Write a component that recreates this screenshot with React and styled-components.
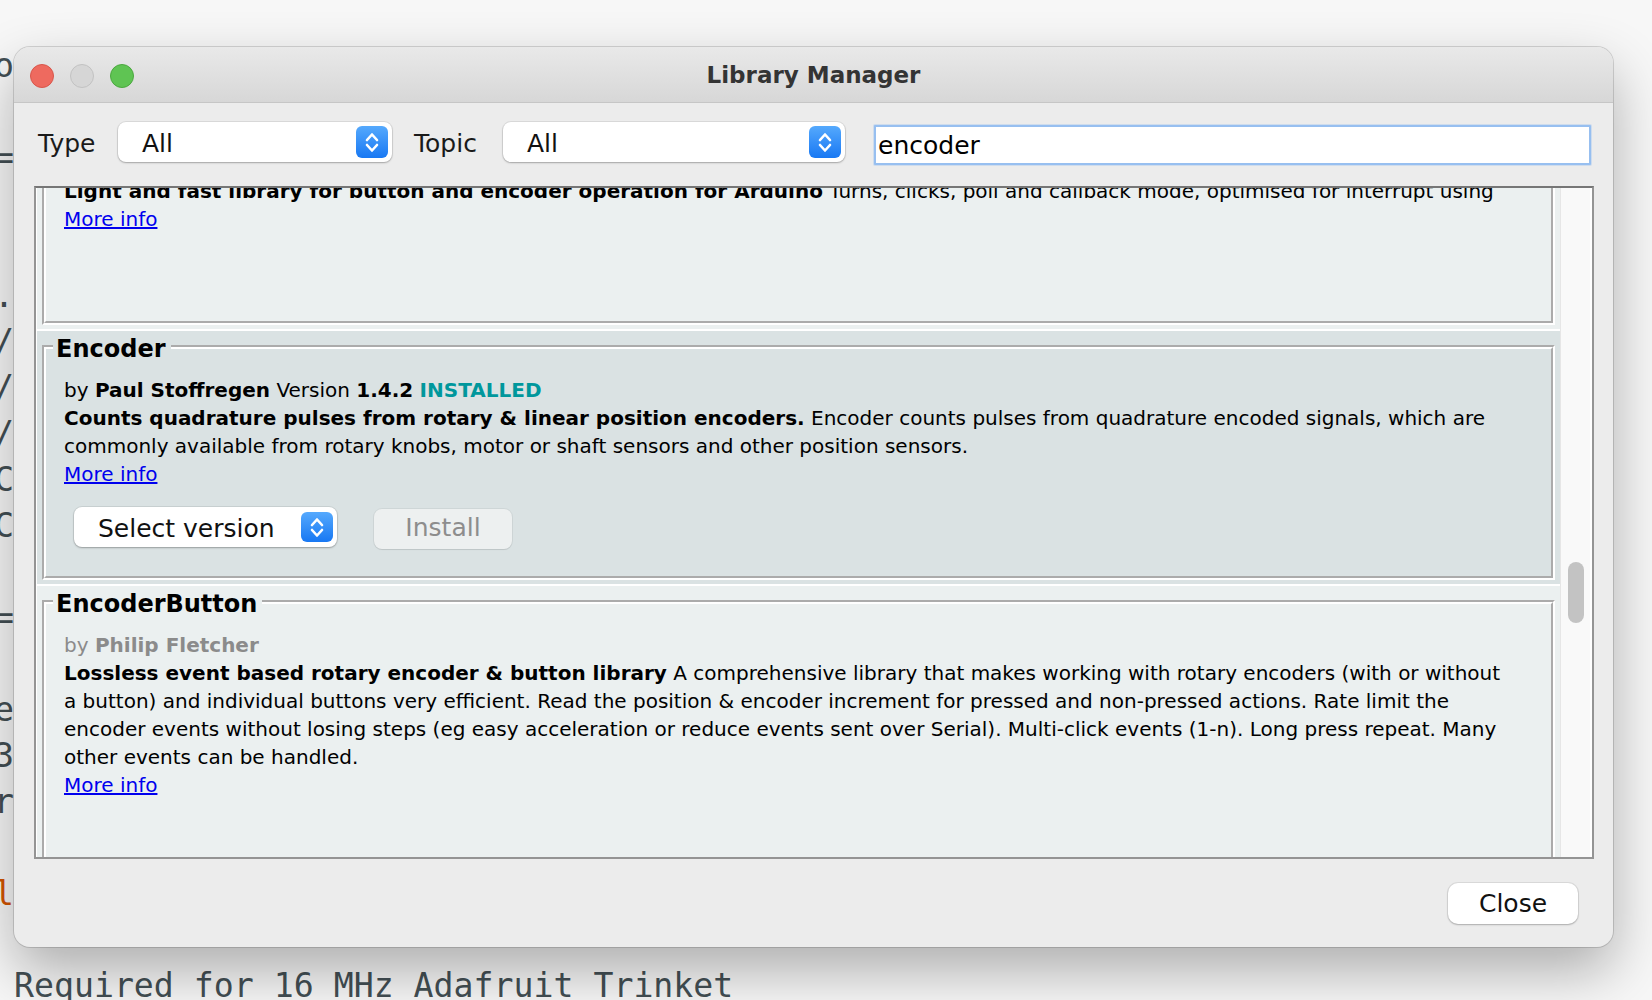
import React from 'react';
import styled, { createGlobalStyle } from 'styled-components';

const GlobalStyle = createGlobalStyle`
  html, body {
    margin: 0;
    padding: 0;
  }
  body {
    width: 1652px;
    height: 1000px;
    overflow: hidden;
    background: #f6f6f6;
    font-family: "DejaVu Sans", Verdana, sans-serif;
  }
`;

const Desktop = styled.div`
  position: relative;
  width: 1652px;
  height: 1000px;
  overflow: hidden;
  background: #f7f7f7;
`;

// the sketch editor peeking out from behind the dialog
const Editor = styled.div`
  margin-left: -6px;
  padding-top: 42.6px;
  font-family: "DejaVu Sans Mono", "Liberation Mono", monospace;
  font-size: 33.2px;
  color: #434f54;
`;

const EditorLine = styled.div`
  height: 46px;
  line-height: 46px;
  white-space: pre;
  color: ${props => (props.keyword ? '#d35400' : 'inherit')};
`;

const Window = styled.div`
  position: absolute;
  left: 14px;
  top: 47px;
  width: 1599px;
  height: 900px;
  display: flex;
  flex-direction: column;
  background: #ececec;
  border-radius: 16px;
  overflow: hidden;
  box-shadow: 0 0 0 1px rgba(0, 0, 0, 0.14), 0 24px 56px rgba(0, 0, 0, 0.3);
`;

const TitleBar = styled.div`
  flex: none;
  height: 55px;
  display: grid;
  grid-template-columns: 1fr auto 1fr;
  align-items: center;
  padding: 0 16px;
  background: linear-gradient(#e9e9e9, #d7d7d7);
  border-bottom: 1px solid #c6c6c6;
`;

const Lights = styled.div`
  display: flex;
  gap: 16px;
  padding-top: 2px;
`;

const Light = styled.span`
  width: 24px;
  height: 24px;
  border-radius: 50%;
  box-sizing: border-box;
  background: ${props => props.fill};
  border: 1px solid ${props => props.edge};
`;

const Title = styled.div`
  font-size: 23px;
  font-weight: bold;
  color: #343434;
`;

const Toolbar = styled.div`
  flex: none;
  display: flex;
  align-items: flex-start;
  padding: 19px 22px 21px 24px;
`;

const FieldLabel = styled.span`
  flex: none;
  width: ${props => props.width}px;
  font-size: 25px;
  line-height: 40px;
  padding-top: 2px;
  color: #1a1a1a;
`;

const SelectBox = styled.div`
  flex: none;
  width: ${props => props.width}px;
  height: 40px;
  box-sizing: border-box;
  display: flex;
  align-items: center;
  justify-content: space-between;
  padding: 0 4px 0 24px;
  margin-right: ${props => props.gap || 0}px;
  background: #fff;
  border-radius: 8px;
  box-shadow: 0 0 0 1px rgba(0, 0, 0, 0.07), 0 1px 2px rgba(0, 0, 0, 0.25);
  font-size: 25px;
  color: #111;
`;

const SelectValue = styled.span`
  padding-top: 2px;
`;

const Stepper = styled.span`
  flex: none;
  width: 32px;
  height: ${props => props.h || 32}px;
  border-radius: 6px;
  background: linear-gradient(#55a9fd, #1878f3);
  display: flex;
  align-items: center;
  justify-content: center;
`;

const SearchInput = styled.input`
  flex: 1;
  min-width: 0;
  height: 40px;
  box-sizing: border-box;
  margin: 3px 0 0;
  padding: 0 2px;
  border: 2px solid #97bff0;
  border-radius: 1px;
  outline: none;
  background: #fff;
  box-shadow: 0 0 0 1px rgba(151, 191, 240, 0.35);
  font-family: "DejaVu Sans", sans-serif;
  font-size: 25px;
  color: #000;
`;

const ListPanel = styled.div`
  flex: none;
  height: 673px;
  box-sizing: border-box;
  margin: 0 19px 0 20px;
  display: flex;
  border: 2px solid #949494;
  border-top-color: #767676;
  background: #fff;
`;

const Viewport = styled.div`
  flex: 1;
  min-width: 0;
  overflow: hidden;
  padding-left: 1px;
`;

const List = styled.div`
  margin-top: ${props => -props.scroll}px;
`;

const Row = styled.div`
  padding: 4px 5px;
  margin-bottom: 2px;
  background: ${props => (props.selected ? '#dae2e3' : '#ebf0f0')};
`;

const Card = styled.fieldset`
  margin: 0;
  min-width: 0;
  padding: 17px 44px 29px 18px;
  border: 4px groove #ffffff;
`;

const CardTitle = styled.legend`
  margin-left: -11px;
  padding: 4px 5px 0 3px;
  font-size: 24px;
  font-weight: bold;
  line-height: 20px;
  color: #000;
`;

const Line = styled.div`
  font-size: 20px;
  line-height: 28px;
  color: ${props => (props.muted ? '#8b8b8b' : '#000')};
`;

const Installed = styled.b`
  color: #00979c;
`;

const MoreInfo = styled.a`
  display: block;
  width: fit-content;
  font-size: 20px;
  line-height: 28px;
  color: #0000ee;
  text-decoration: underline;
  cursor: pointer;
`;

const Actions = styled.div`
  display: flex;
  align-items: flex-start;
  gap: 37px;
  height: 42px;
  margin-top: 19px;
  margin-bottom: -2px;
  padding-left: 10px;
  visibility: ${props => (props.shown ? 'visible' : 'hidden')};
`;

const InstallButton = styled.button`
  width: 138px;
  height: 40px;
  margin-top: 2px;
  padding: 0 0 3px;
  border: none;
  border-radius: 8px;
  background: #edf0f0;
  box-shadow: 0 0 0 1px rgba(0, 0, 0, 0.05), 0 1px 1px rgba(0, 0, 0, 0.08);
  font-family: "DejaVu Sans", sans-serif;
  font-size: 25px;
  color: #8d8d8d;
`;

const ScrollTrack = styled.div`
  flex: none;
  width: 30px;
  margin-right: 2px;
  box-sizing: border-box;
  background: #f9f9f9;
  border-left: 1px solid #e6e6e6;
`;

const ScrollThumb = styled.div`
  width: 16px;
  height: 61px;
  margin-left: 7px;
  border-radius: 8px;
  background: #c3c3c3;
`;

const Footer = styled.div`
  flex: 1;
  display: flex;
  justify-content: flex-end;
  align-items: flex-start;
  padding: 24px 35px 0 0;
`;

const CloseButton = styled.button`
  width: 130px;
  height: 41px;
  padding: 0;
  border: none;
  border-radius: 10px;
  background: #fff;
  box-shadow: 0 0 0 1px rgba(0, 0, 0, 0.07), 0 1px 2px rgba(0, 0, 0, 0.22);
  font-family: "DejaVu Sans", sans-serif;
  font-size: 25px;
  color: #111;
`;

const Chevrons = () => (
  <svg width="32" height="32" viewBox="0 0 32 32" fill="none">
    <path
      d="M11 14l5-5.5 5 5.5M11 19l5 5.5 5-5.5"
      stroke="#fff"
      strokeWidth="2.6"
      strokeLinecap="round"
      strokeLinejoin="round"
    />
  </svg>
);

const editorLines = [
  'o', '', '=', '', '', '.', '/', '/', '/', 'C', 'C', '', '=', '',
  'e', '3', 'r', '', 'l', '', ' Required for 16 MHz Adafruit Trinket'
];

const libraries = [
  {
    name: 'EncButton',
    author: 'AlexGyver',
    summary: 'Light and fast library for button and encoder operation for Arduino',
    text: 'Turns, clicks, poll and callback mode, optimised for interrupt using'
  },
  {
    name: 'Encoder',
    author: 'Paul Stoffregen',
    version: '1.4.2',
    installed: true,
    summary: 'Counts quadrature pulses from rotary & linear position encoders.',
    text:
      'Encoder counts pulses from quadrature encoded signals, which are commonly available from rotary knobs, motor or shaft sensors and other position sensors.'
  },
  {
    name: 'EncoderButton',
    author: 'Philip Fletcher',
    summary: 'Lossless event based rotary encoder & button library',
    text:
      'A comprehensive library that makes working with rotary encoders (with or without a button) and individual buttons very efficient. Read the position & encoder increment for pressed and non-pressed actions. Rate limit the encoder events without losing steps (eg easy acceleration or reduce events sent over Serial). Multi-click events (1-n). Long press repeat. Many other events can be handled.'
  }
];

const LibraryRow = ({ lib, selected }) => (
  <Row selected={selected}>
    <Card>
      <CardTitle>{lib.name}</CardTitle>
      {lib.installed ? (
        <Line>
          by <b>{lib.author}</b> Version <b>{lib.version}</b>{' '}
          <Installed>INSTALLED</Installed>
        </Line>
      ) : (
        <Line muted>
          by <b>{lib.author}</b>
        </Line>
      )}
      <Line>
        <b>{lib.summary}</b> {lib.text}
      </Line>
      <MoreInfo>More info</MoreInfo>
      <Actions shown={selected}>
        <SelectBox width={263}>
          <SelectValue>Select version</SelectValue>
          <Stepper h={30}>
            <Chevrons />
          </Stepper>
        </SelectBox>
        <InstallButton>Install</InstallButton>
      </Actions>
    </Card>
  </Row>
);

export default function App() {
  return (
    <Desktop>
      <GlobalStyle />
      <Editor>
        {editorLines.map((line, i) => (
          <EditorLine key={i} keyword={i === 18}>
            {line}
          </EditorLine>
        ))}
      </Editor>

      <Window>
        <TitleBar>
          <Lights>
            <Light fill="#ee6a5f" edge="#d8564b" />
            <Light fill="#d6d6d6" edge="#c2c2c2" />
            <Light fill="#5fc453" edge="#4ba83f" />
          </Lights>
          <Title>Library Manager</Title>
          <span />
        </TitleBar>

        <Toolbar>
          <FieldLabel width={80}>Type</FieldLabel>
          <SelectBox width={274} gap={22}>
            <SelectValue>All</SelectValue>
            <Stepper>
              <Chevrons />
            </Stepper>
          </SelectBox>
          <FieldLabel width={89}>Topic</FieldLabel>
          <SelectBox width={342} gap={29}>
            <SelectValue>All</SelectValue>
            <Stepper>
              <Chevrons />
            </Stepper>
          </SelectBox>
          <SearchInput defaultValue="encoder" />
        </Toolbar>

        <ListPanel>
          <Viewport>
            <List scroll={84}>
              {libraries.map(lib => (
                <LibraryRow key={lib.name} lib={lib} selected={lib.installed} />
              ))}
            </List>
          </Viewport>
          <ScrollTrack>
            <ScrollThumb style={{ marginTop: 374 }} />
          </ScrollTrack>
        </ListPanel>

        <Footer>
          <CloseButton>Close</CloseButton>
        </Footer>
      </Window>
    </Desktop>
  );
}
